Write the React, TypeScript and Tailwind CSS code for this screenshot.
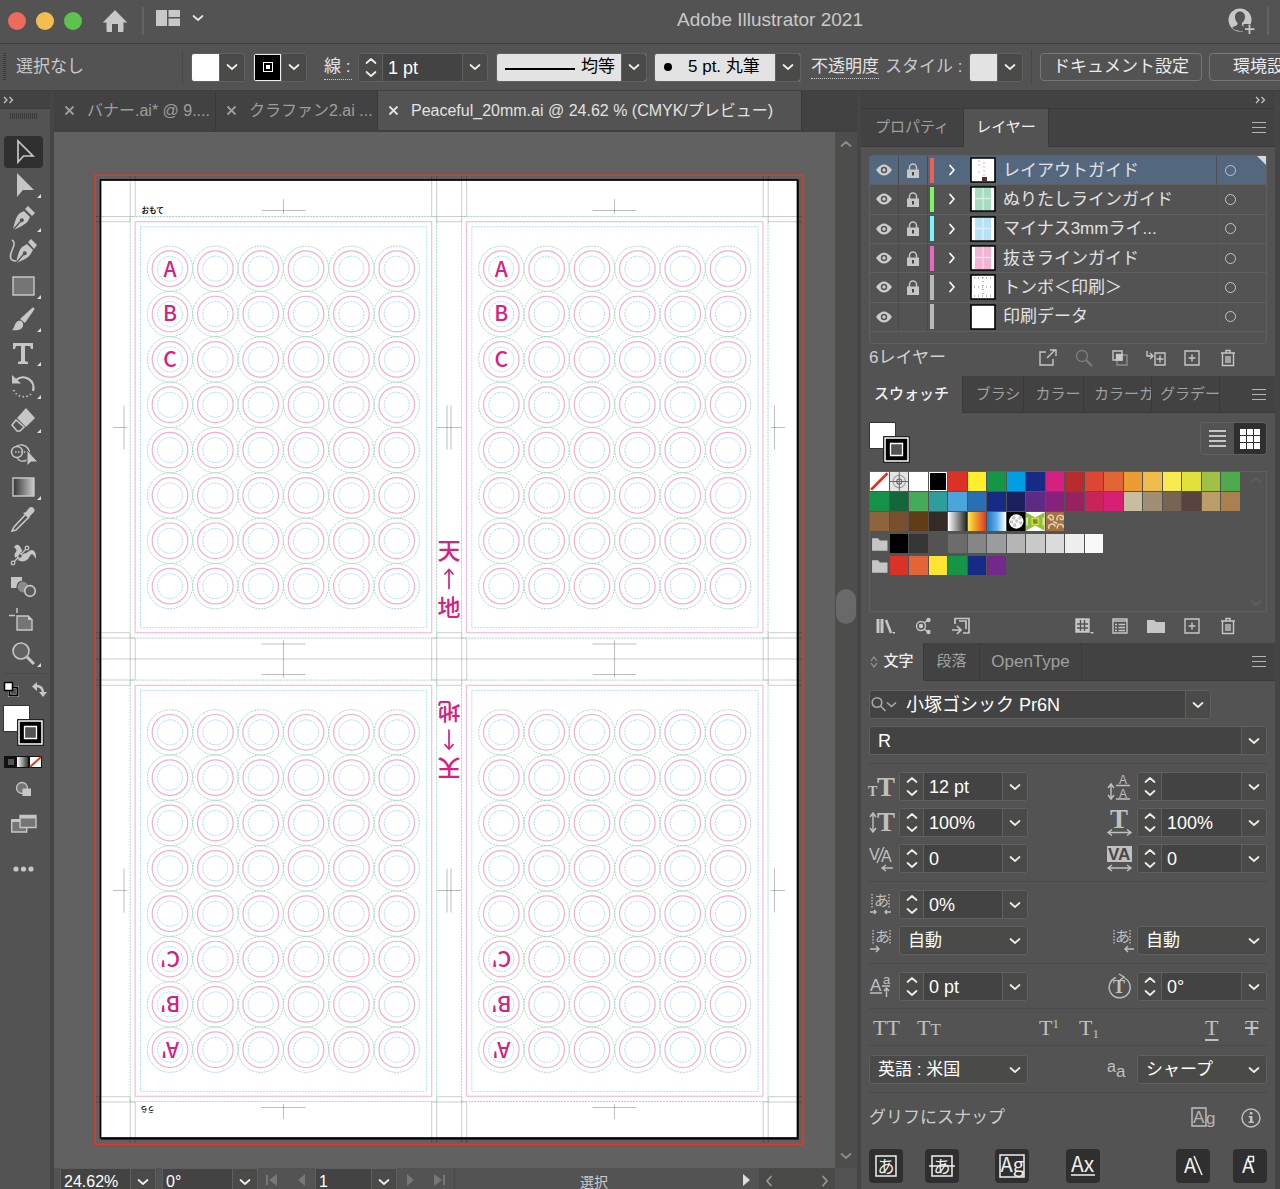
import type { ReactNode } from 'react'
import clsx from 'clsx'

const JP = "font-['Liberation_Sans','Noto_Sans_CJK_JP',sans-serif]"

/* ---------- small shared pieces ---------- */

function Chevron({ up, className }: { up?: boolean; className?: string }) {
  return (
    <svg width="12" height="8" viewBox="0 0 12 8" className={clsx('shrink-0', className)} fill="none" stroke="currentColor" strokeWidth="1.7" strokeLinecap="round" strokeLinejoin="round">
      <path d={up ? 'M1.5 6 6 2l4.500 4' : 'M1.500 2 6 6l4.500-4'} />
    </svg>
  )
}

function DropButton({ label }: { label: string }) {
  return (
    <button aria-label={label} className="flex w-[25px] shrink-0 items-center justify-center self-stretch border-l border-[#606060] bg-[#4a4a48] text-[#eee]">
      <Chevron />
    </button>
  )
}

function Stepper({ label }: { label: string }) {
  return (
    <div className="flex w-6 shrink-0 flex-col justify-between border-r border-[#606060] bg-[#4a4a48] py-px text-[#eee]">
      <button aria-label={`${label} を増やす`} className="flex h-3 items-center justify-center"><Chevron up /></button>
      <button aria-label={`${label} を減らす`} className="flex h-3 items-center justify-center"><Chevron /></button>
    </div>
  )
}

interface FieldProps {
  label: string
  value: string
  stepper?: boolean
  className?: string
  lead?: ReactNode
}

function Field({ label, value, stepper, className, lead }: FieldProps) {
  return (
    <div className={clsx('flex h-[29px] shrink-0 overflow-hidden rounded-[3px] border border-[#606060] bg-[#434343]', className)}>
      {stepper && <Stepper label={label} />}
      {lead}
      <input aria-label={label} defaultValue={value} className={clsx('w-0 min-w-0 flex-1 bg-transparent pt-[2px] text-[18px] text-white outline-none', stepper ? 'pl-[5px]' : 'pl-2')} />
      <DropButton label={`${label} の候補`} />
    </div>
  )
}

function Select({ label, value, className }: { label: string; value: string; className?: string }) {
  return (
    <div className={clsx('relative h-[29px] shrink-0 rounded-[3px] border border-[#606060] bg-[#4a4a48]', className)}>
      <select aria-label={label} className="h-full w-full appearance-none bg-transparent pl-2 text-[17px] text-white outline-none">
        <option>{value}</option>
      </select>
      <Chevron className="pointer-events-none absolute top-[10px] right-[6px] text-[#eee]" />
    </div>
  )
}

function SwatchDrop({ label, children }: { label: string; children: ReactNode }) {
  return (
    <div className="flex h-[29px] w-[54px] shrink-0 overflow-hidden rounded-[3px] border border-[#606060]">
      <div className="flex-1">{children}</div>
      <DropButton label={label} />
    </div>
  )
}

function MenuIcon() {
  return (
    <button aria-label="パネルメニュー" className="flex w-[14px] flex-col gap-1">
      <span className="h-px w-full bg-[#b5b5b5]" />
      <span className="h-px w-full bg-[#b5b5b5]" />
      <span className="h-px w-full bg-[#b5b5b5]" />
    </button>
  )
}

function Collapse() {
  return (
    <svg width="11" height="8" viewBox="0 0 11 8" fill="none" stroke="#c4c4c4" strokeWidth="1.300">
      <path d="M1 1l3 3-3 3M6.500 1l3 3-3 3" />
    </svg>
  )
}

/* ---------- title bar and control bar ---------- */

function TitleBar() {
  return (
    <header className="flex h-11 shrink-0 items-center border-b border-[#404040] bg-[#535353] pb-[2px]">
      <div className="flex w-[312px] shrink-0 items-center pl-2">
        <div className="flex gap-[10px]">
          <button aria-label="閉じる" className="h-[18px] w-[18px] rounded-full bg-[#ee6a5f]" />
          <button aria-label="しまう" className="h-[18px] w-[18px] rounded-full bg-[#f5bd4f]" />
          <button aria-label="拡大" className="h-[18px] w-[18px] rounded-full bg-[#5dc24e]" />
        </div>
        <button aria-label="ホーム" className="ml-5">
          <svg width="26" height="24" viewBox="0 0 26 24" fill="#c8c8c8">
            <path d="M13 1 .800 13.500h3.700V22q0 1 1 1H10v-8h6v8h4.500q1 0 1-1v-8.500h3.700z" />
          </svg>
        </button>
        <div className="ml-[14px] h-7 w-[2px] bg-[#626262]" />
        <button aria-label="ワークスペース" className="mb-[6px] ml-3 flex items-center gap-3 text-[#e6e6e6]">
          <svg width="24" height="16" viewBox="0 0 24 16" fill="#c8c8c8">
            <path d="M0 0h11v16H0zM12.500 0H24v7H12.500zM12.500 8.500H24V16H12.500z" />
          </svg>
          <Chevron />
        </button>
      </div>
      <h1 className="flex-1 text-center text-[19px] text-[#c9c9c9]">Adobe Illustrator 2021</h1>
      <div className="flex w-[52px] shrink-0 items-center gap-3">
        <button aria-label="アカウント">
          <svg width="27" height="26" viewBox="0 0 27 26">
            <circle cx="12" cy="12" r="11.500" fill="#c8c8c8" />
            <path d="M12 3.500c-3.500 0-5 2.500-5 5.500 0 2.500 1 4.500 2.500 5.800v1.500C9 18 5 18.500 4 20q3.500 3 8 3h4v-4c-1.500-.800-2-1.500-2-2.700v-1.500C16 13.500 17 11.500 17 9c0-3-1.500-5.500-5-5.500z" fill="#535353" />
            <path d="M15.500 16H27v10H15.500z" fill="#535353" />
            <path d="M21.500 16.500v9.500M17 21.200h9.500" stroke="#c8c8c8" strokeWidth="1.800" />
          </svg>
        </button>
        <div className="h-7 w-[2px] bg-[#626262]" />
      </div>
    </header>
  )
}

function ControlBar() {
  return (
    <div className="flex h-[47px] shrink-0 items-center overflow-hidden border-b border-[#404040] bg-[#535353] text-[17px] whitespace-nowrap text-[#c8c8c8]">
      <div className="ml-[3px] h-7 w-[3px] shrink-0 bg-[repeating-linear-gradient(#3c3c3c_0_1px,#535353_1px_2px)]" />
      <span className="ml-[10px] w-[166px] shrink-0">選択なし</span>
      <div className="mr-2 h-[34px] w-px shrink-0 bg-[#484848]" />
      <SwatchDrop label="塗り"><div className="h-full bg-white" /></SwatchDrop>
      <div className="ml-2">
        <SwatchDrop label="線のカラー">
          <div className="flex h-full items-center justify-center border border-[#eee] bg-black">
            <div className="flex h-[10px] w-[10px] items-center justify-center border border-white"><div className="h-1 w-1 bg-white" /></div>
          </div>
        </SwatchDrop>
      </div>
      <span className="ml-[17px] w-7 shrink-0 border-b border-dotted border-[#ccc] leading-6 text-[#e4e4e4]">線 :</span>
      <Field label="線幅" value="1 pt" stepper className="ml-[6px] w-[130px]" />
      <div className="ml-2 flex h-[29px] w-[151px] shrink-0 overflow-hidden rounded-[3px] border border-[#606060] bg-[#e3e3e3]">
        <svg width="78" height="27" viewBox="0 0 78 27" className="shrink-0"><path d="M8 15h70" stroke="#000" strokeWidth="2.200" /></svg>
        <select aria-label="可変線幅プロファイル" className="w-0 min-w-0 flex-1 appearance-none bg-transparent pl-[6px] text-black outline-none"><option>均等</option></select>
        <DropButton label="プロファイルの候補" />
      </div>
      <div className="ml-[7px] flex h-[29px] w-[147px] shrink-0 items-center overflow-hidden rounded-[3px] border border-[#606060] bg-[#e3e3e3]">
        <div className="ml-[9px] h-2 w-2 shrink-0 rounded-full bg-black" />
        <select aria-label="ブラシ定義" className="w-0 min-w-0 flex-1 appearance-none bg-transparent pl-4 text-black outline-none"><option>5 pt. 丸筆</option></select>
        <DropButton label="ブラシの候補" />
      </div>
      <a href="#opacity" className="ml-[10px] shrink-0 border-b border-dotted border-[#ccc] leading-[23px] text-[#e4e4e4]">不透明度</a>
      <span className="ml-[6px] w-[84px] shrink-0">スタイル :</span>
      <SwatchDrop label="スタイル"><div className="h-full bg-[#e3e3e3]" /></SwatchDrop>
      <div className="mx-2 h-[34px] w-px shrink-0 bg-[#484848]" />
      <button className="h-7 w-[162px] shrink-0 rounded-[4px] border border-[#777] leading-6 text-[#ececec]">ドキュメント設定</button>
      <button className="ml-[7px] h-7 w-[116px] shrink-0 rounded-[4px] border border-[#777] leading-6 text-[#ececec]">環境設定</button>
    </div>
  )
}

/* ---------- tool bar ---------- */

const G = '#c6c6c6'

const tools: { name: string; more?: boolean; art: ReactNode }[] = [
  { name: '選択', art: <path d="M11 4v21l5.500-6H26z" fill="none" stroke={G} strokeWidth="1.700" /> },
  { name: 'ダイレクト選択', more: true, art: <path d="M10 3v24l6-7h11z" fill={G} /> },
  {
    name: 'ペン',
    more: true,
    art: (
      <>
        <path d="M6 25C8 18 9 12 13 9l4-2 6 6-2 4c-3 4-9 6-14 9l7-8a2 2 0 1 0-1-1z" fill={G} />
        <path d="m18 5 3-3 7 7-3 3z" fill={G} />
      </>
    ),
  },
  {
    name: '曲線',
    art: (
      <>
        <path d="M9 25c2-7 3-12 6-15l5-3 6 6-3 5c-3 4-8 5-13 8l7-8a2 2 0 1 0-1-1z" fill={G} />
        <path d="m21 5 3-3 6 6-3 4z" fill={G} />
        <path d="M5 3c7 4-6 15 0 20 2 1 3 1 4 1" fill="none" stroke={G} strokeWidth="1.500" />
      </>
    ),
  },
  { name: '長方形', more: true, art: <path d="M6 6h21v18H6z" fill="#757575" stroke={G} strokeWidth="1.400" /> },
  {
    name: 'ブラシ',
    more: true,
    art: (
      <>
        <path d="M5 26c3-2 2-7 6-9 3-1 6 1 5 5-1 4-6 5-11 4z" fill={G} />
        <path d="M13 15 25 4c2-1 3 0 2 2L18 19z" fill={G} />
      </>
    ),
  },
  { name: '文字', more: true, art: <path d="M6 5h20v6h-2l-1-3h-5v15l3 1v2H11v-2l3-1V8H9l-1 3H6z" fill={G} /> },
  {
    name: '回転',
    more: true,
    art: (
      <>
        <path d="M9 9a10.500 10.500 0 0 1 17 11" fill="none" stroke={G} strokeWidth="2.300" />
        <path d="M24 23a11 11 0 0 1-18-6" fill="none" stroke={G} strokeWidth="1.600" strokeDasharray="1.500 2.300" />
        <path d="M5 4v8.500h9z" fill={G} />
      </>
    ),
  },
  {
    name: '消しゴム',
    more: true,
    art: (
      <>
        <path d="M19 3 10 13l9 9 9-9z" fill={G} />
        <path d="m9 15-4 5 5 6h3l4-4z" fill="none" stroke={G} strokeWidth="1.600" />
      </>
    ),
  },
  {
    name: 'シェイプ形成',
    art: (
      <>
        <circle cx="10" cy="14" r="5.500" fill="none" stroke={G} strokeWidth="1.400" />
        <path d="M9 8.500a8.500 8.500 0 1 1 10 14c-5 2-8-1-9-3" fill="none" stroke={G} strokeWidth="1.400" />
        <path d="M8 14h14" stroke={G} strokeWidth="1.400" strokeDasharray="1.500 1.500" />
        <path d="M20 12v16l4-4h7z" fill={G} stroke="#535353" strokeWidth="1" />
      </>
    ),
  },
  { name: 'グラデーション', more: true, art: <path d="M6 6h21v18H6z" fill="url(#toolGradient)" stroke={G} strokeWidth="1.400" /> },
  {
    name: 'スポイト',
    art: (
      <>
        <path d="M18 10 7 22l-2 4 4-1 12-12" fill="none" stroke={G} strokeWidth="1.600" />
        <path d="m16 8 3-1 3-4c3-3 7 1 5 4l-4 4-1 3z" fill={G} />
      </>
    ),
  },
  {
    name: 'パペットワープ',
    art: (
      <>
        <path d="M7 8c5-6 7 2 9 5 3 4 5-2 9-2 4 1 4 5 4 9-3-5-4-6-6-3-4 8-12 6-15 1-2-4 3-5 1-8z" fill={G} />
        <path d="M6 24 20 9" stroke="#535353" strokeWidth="3" />
        <path d="M6 24 20 9" stroke={G} strokeWidth="1.300" />
        <g fill="#535353" stroke={G} strokeWidth="1.300"><circle cx="6" cy="24" r="1.800" /><circle cx="13" cy="17" r="2.300" /><circle cx="20" cy="9" r="1.800" /></g>
      </>
    ),
  },
  {
    name: 'ブレンド',
    art: (
      <>
        <path d="M4 5h11v11H4z" fill={G} />
        <circle cx="16" cy="15" r="6" fill="#8a8a8a" stroke="#535353" strokeWidth="1.200" />
        <circle cx="23" cy="19" r="5.300" fill="#5a5a5a" stroke={G} strokeWidth="1.700" />
      </>
    ),
  },
  {
    name: 'アートボード',
    art: (
      <>
        <path d="M10 2v5M2 9.500h6" stroke={G} strokeWidth="1.500" />
        <path d="M10 10h11l4 4v10H10z" fill="#757575" stroke={G} strokeWidth="1.400" />
        <path d="M21 9v5h5z" fill={G} />
      </>
    ),
  },
  {
    name: 'ズーム',
    more: true,
    art: (
      <>
        <circle cx="14" cy="12" r="8" fill="#626262" stroke={G} strokeWidth="1.600" />
        <path d="m20 18 7 7" stroke={G} strokeWidth="3" />
      </>
    ),
  },
]

// overlapping fill and stroke squares
function FillStroke() {
  return (
    <svg width="41" height="41" viewBox="0 0 41 41" className="shrink-0">
      <path d="M.500.500h26v26H.500z" fill="#fff" stroke="#333" />
      <path d="M14.500 14.500h26v26h-26z" fill="#000" stroke="#222" />
      <path d="M16 16h23v23H16z" fill="#000" stroke="#fff" strokeWidth="1.500" />
      <path d="M21.500 21.500h12v12h-12z" fill="#535353" stroke="#fff" strokeWidth="1.300" />
    </svg>
  )
}

function ToolBar() {
  return (
    <aside className="flex w-[50px] shrink-0 flex-col bg-[#535353]">
      <div className="flex h-[18px] shrink-0 items-center border-b border-[#3d3d3d] bg-[#424242] pl-[3px]"><Collapse /></div>
      <div className="mt-1 ml-[10px] h-[6px] w-[27px] shrink-0 bg-[repeating-linear-gradient(90deg,#3a3a3a_0_1px,#535353_1px_2px)]" />
      <div className="mt-4 grid h-[536px] shrink-0 grid-rows-[repeat(16,minmax(0,1fr))] pl-1">
        {tools.map((tool, i) => (
          <button key={tool.name} aria-label={tool.name} className={clsx('flex w-[39px] items-center justify-center rounded-[4px]', i === 0 && 'my-px bg-[#303030]')}>
            <svg width="39" height="30" viewBox="-3 0 39 30">
              <defs><linearGradient id="toolGradient"><stop offset="0" stopColor="#333" /><stop offset="1" stopColor="#ccc" /></linearGradient></defs>
              {tool.art}
              {tool.more && <path d="M34 24v4h-4z" fill="#ddd" />}
            </svg>
          </button>
        ))}
      </div>
      <div className="mx-1 mt-[2px] h-px bg-[#4a4a4a]" />
      <div className="mt-[7px] flex h-4 items-center justify-between pr-[3px] pl-[3px]">
        <svg width="16" height="16" viewBox="0 0 16 16">
          <path d="M6.500 6.500h8v8h-8z" fill="#535353" stroke="#ddd" strokeWidth="3" />
          <path d="M6.500 6.500h8v8h-8z" fill="none" stroke="#000" strokeWidth="2" />
          <path d="M1.500 1.500h8v8h-8z" fill="#fff" stroke="#000" strokeWidth="1.500" />
        </svg>
        <svg width="15" height="15" viewBox="0 0 15 15">
          <path d="M4 4c5 0 7 2 7 7" fill="none" stroke={G} strokeWidth="2.400" />
          <path d="M0 4.500 5 0v9zM7 10h8l-4 5z" fill={G} />
        </svg>
      </div>
      <div className="mt-2 ml-[3px]"><FillStroke /></div>
      <svg width="38" height="12" viewBox="0 0 38 12" className="mt-[10px] ml-1">
        <defs><linearGradient id="miniGradient"><stop offset="0" stopColor="#fff" /><stop offset="1" stopColor="#333" /></linearGradient></defs>
        <path d="M0 0h38v12H0z" fill="#111" />
        <path d="M4 3h6v6H4z" fill="#535353" />
        <path d="M13 1h11v10H13z" fill="url(#miniGradient)" />
        <path d="M26 1h11v10H26z" fill="#fff" />
        <path d="m26 11 11-10" stroke="#e3371e" strokeWidth="2" />
      </svg>
      <svg width="20" height="18" viewBox="0 0 20 18" className="mt-3 ml-[14px]">
        <circle cx="8" cy="8" r="5.500" fill="#757575" stroke={G} strokeWidth="1.300" />
        <path d="M8.500 8.500H17V16H8.500z" fill={G} />
      </svg>
      <svg width="26" height="19" viewBox="0 0 26 19" className="mt-4 ml-[11px]">
        <path d="M.700 6h15v12H.700z" fill="#757575" stroke={G} strokeWidth="1.400" />
        <path d="M1 5h9v3H1z" fill={G} />
        <path d="M9 1.500h16v12H9z" fill="#757575" stroke={G} strokeWidth="1.400" />
        <path d="M9 1h16v3.500H9z" fill={G} />
      </svg>
      <svg width="22" height="6" viewBox="0 0 22 6" fill={G} className="mt-[33px] ml-[13px]">
        <circle cx="3" cy="3" r="2.600" /><circle cx="10.500" cy="3" r="2.600" /><circle cx="18" cy="3" r="2.600" />
      </svg>
    </aside>
  )
}

/* ---------- document window ---------- */

function DocTab({ title, active, className }: { title: string; active?: boolean; className: string }) {
  return (
    <div className={clsx('flex shrink-0 items-center gap-3 border-r border-[#383838] px-[10px] whitespace-nowrap', active ? 'bg-[#535353] text-[#e2e2e2]' : 'bg-[#424242] text-[#9e9e9e]', className)}>
      <button aria-label={`${title} を閉じる`}>
        <svg width="11" height="11" viewBox="0 0 11 11" stroke="currentColor" strokeWidth="1.800"><path d="m1.500 1.500 8 8m0-8-8 8" /></svg>
      </button>
      <button className="text-[16px]">{title}</button>
    </div>
  )
}

const blocks = [
  { x: 0, y: 0, labels: [[0, 'A', 8], [1, 'B', 7], [2, 'C', 8]], flip: false },
  { x: 331.3, y: 0, labels: [[0, 'A', 8], [1, 'B', 7], [2, 'C', 8]], flip: false },
  { x: 0, y: 463.6, labels: [[5, "C'", 8], [6, "B'", 8], [7, "A'", 8]], flip: true },
  { x: 331.3, y: 463.6, labels: [[5, "C'", 8], [6, "B'", 8], [7, "A'", 8]], flip: true },
] as const

const PITCH = 45.35

function Sheet({ labels, flip }: { labels: readonly (readonly [number, string, number])[]; flip: boolean }) {
  const cells = Array.from({ length: 48 }, (_, i) => [170 + (i % 6) * PITCH, 268.7 + Math.floor(i / 6) * PITCH])
  return (
    <>
      <rect x="130.200" y="216.500" width="306.500" height="421.500" stroke="#a5dabc" strokeDasharray="2 1" />
      <rect x="135.200" y="221.700" width="296.500" height="411" stroke="#f6bdd9" strokeWidth="1.200" />
      <rect x="140.500" y="226.700" width="286.200" height="401" stroke="#abe0fa" strokeDasharray="2 1" />
      {cells.map(([cx, cy], i) => (
        <g key={i}>
          <circle cx={cx} cy={cy} r="22.600" stroke="#9bd6b5" strokeWidth=".900" strokeDasharray="2 1" />
          <circle cx={cx} cy={cy} r="17.800" stroke="#f2add0" strokeWidth="1.200" />
          <circle cx={cx} cy={cy} r="12.500" stroke="#a3dcf9" strokeDasharray="2 1" />
        </g>
      ))}
      {labels.map(([row, text, drop]) => {
        const cy = 268.7 + row * PITCH
        return (
          <text key={text} x="170" y={cy + drop} textAnchor="middle" fontSize="21" fontWeight="500" fill="#d7207f" transform={flip ? `rotate(180 170 ${cy})` : undefined}>
            {text}
          </text>
        )
      })}
    </>
  )
}

function SpineLabel() {
  return (
    <g fill="#d7207f" fontSize="23" fontWeight="500" textAnchor="middle">
      <text x="449" y="559">天</text>
      <path d="M449 589v-19M444.500 574.500l4.500-5 4.500 5" fill="none" stroke="#d7207f" strokeWidth="1.700" />
      <text x="449" y="616">地</text>
    </g>
  )
}

function Artwork() {
  return (
    <svg viewBox="94 174 710 971" className="h-[971px] w-[710px] shrink-0 font-['Noto_Sans_CJK_JP',sans-serif]" fill="none">
      <rect x="95" y="175.200" width="708" height="969" stroke="#e2382a" strokeWidth="1.500" />
      <rect x="101" y="180" width="698" height="960" fill="#2c2c2c" />
      <rect x="100.500" y="180" width="697" height="958" fill="#fff" stroke="#000" strokeWidth="1.700" />
      {/* trim marks */}
      <g stroke="#000" strokeOpacity=".2" strokeWidth="1">
        <path d="M130.200 176v46M135.200 176v41M431.700 176v41M436.700 176v46M461.700 176v46M466.700 176v41M763.200 176v41M768.200 176v46" />
        <path d="M130.200 1143v-46M135.200 1143v-41M431.700 1143v-41M436.700 1143v-46M461.700 1143v-46M466.700 1143v-41M763.200 1143v-41M768.200 1143v-46" />
        <path d="M96 216.500h39M96 221.700h34M763 216.500h39M768 221.700h34M96 1096.700h34M96 1102h39M768 1096.700h34M763 1102h39" />
        <path d="M436.700 221.700h25M431.700 216.500h35M436.700 1096.700h25M431.700 1102h35" />
        <path d="M96 632.700h34M96 638h39M96 680h39M96 685.300h34M768 632.700h34M763 638h39M763 680h39M768 685.300h34M96 659h706" />
        <path d="M130.200 633v52M135.200 638v42M763.200 638v42M768.200 633v52" />
        <path d="M436.700 632.700h25v52.600h-25zM431.700 638h35v42h-35z" />
      </g>
      {/* centre marks */}
      <g stroke="#000" strokeOpacity=".25" strokeWidth="1">
        {[283.5, 614.5].map((x) => (
          <path key={x} d={`M${x} 199v15M${x - 22} 210.500h44M${x} 640.500v37M${x - 22} 644h44M${x - 22} 674.500h44M${x} 1104v15M${x - 22} 1107.500h44`} />
        ))}
        {[427.5, 890.5].map((y) => (
          <path key={y} d={`M124 ${y - 22}v44M113 ${y}h14M447 ${y - 22}v44M451 ${y - 22}v44M437 ${y}h25M774.500 ${y - 22}v44M771 ${y}h14`} />
        ))}
      </g>
      {blocks.map((b) => (
        <g key={`${b.x}-${b.y}`} transform={`translate(${b.x} ${b.y})`}>
          <Sheet labels={b.labels} flip={b.flip} />
        </g>
      ))}
      <SpineLabel />
      <g transform="rotate(180 449 659.300)"><SpineLabel /></g>
      <text x="141.500" y="213" fontSize="7.500" fontWeight="700" fill="#111">おもて</text>
      <text x="140.500" y="1113" fontSize="7" fontWeight="700" fill="#111" transform="rotate(180 147.500 1110)">うら</text>
    </svg>
  )
}

function Arrow({ d, dim, label }: { d: string; dim?: boolean; label: string }) {
  return (
    <button aria-label={label} className={dim ? 'text-[#777]' : 'text-[#ddd]'}>
      <svg width="12" height="12" viewBox="0 0 12 12" fill="currentColor"><path d={d} /></svg>
    </button>
  )
}

function StatusSelect({ label, value, className }: { label: string; value: string; className: string }) {
  return (
    <div className={clsx('flex h-7 shrink-0 border border-[#5e5e5e] bg-[#434343]', className)}>
      <input aria-label={label} defaultValue={value} className="w-0 min-w-0 flex-1 bg-transparent pl-[3px] text-[16px] text-white outline-none" />
      <DropButton label={`${label} の候補`} />
    </div>
  )
}

function DocumentWindow() {
  return (
    <main className="flex min-w-0 flex-1 flex-col border-l-4 border-[#454545]">
      <div className="flex h-[41px] shrink-0 overflow-hidden border-b-2 border-[#404040] bg-[#424242]">
        <DocTab title="バナー.ai* @ 9...." className="w-[162px]" />
        <DocTab title="クラファン2.ai ..." className="w-[162px]" />
        <DocTab title="Peaceful_20mm.ai @ 24.62 % (CMYK/プレビュー)" active className="w-[424px]" />
      </div>
      <div className="flex min-h-0 flex-1">
        <div className="min-w-0 flex-1 overflow-hidden bg-[#616161] pt-[42px] pl-10">
          <Artwork />
        </div>
        <div className="flex w-[22px] shrink-0 flex-col items-center justify-between bg-[#4d4d4b] py-2 text-[#8e8e8e]">
          <Chevron up />
          <div className="mb-[88px] h-[35px] w-5 rounded-full bg-[#696969]" />
          <Chevron />
        </div>
      </div>
      <div className="flex h-[21px] shrink-0 items-start overflow-hidden bg-[#535353] pl-[6px]">
        <StatusSelect label="ズーム率" value="24.62%" className="w-[96px]" />
        <StatusSelect label="ビューを回転" value="0°" className="ml-[6px] w-[96px]" />
        <div className="flex w-[57px] items-center justify-around pt-[6px]">
          <Arrow label="最初" dim d="M0 1h2v10H0zM11 0v12L3 6z" />
          <Arrow label="前へ" dim d="M10 0v12L3 6z" />
        </div>
        <StatusSelect label="アートボード" value="1" className="w-[82px]" />
        <div className="flex w-[57px] items-center justify-around pt-[6px]">
          <Arrow label="次へ" dim d="M2 0v12l7-6z" />
          <Arrow label="最後" dim d="M9 1h2v10H9zM0 0v12l8-6z" />
        </div>
        <span className="flex-1 border-l border-[#4a4a4a] text-center text-[14px] leading-7 text-[#ccc]">選択</span>
        <div className="flex w-[26px] justify-center pt-[6px]"><Arrow label="ステータス" d="M3 0v12l7-6z" /></div>
        <div className="flex h-full w-[76px] items-center justify-between bg-[#4a4a48] px-1 pt-1 text-[#999]">
          <Chevron className="rotate-90" />
          <Chevron className="-rotate-90" />
        </div>
        <div className="w-[22px]" />
      </div>
    </main>
  )
}

/* ---------- panels ---------- */

interface PanelTabProps {
  label: string
  active?: boolean
  latin?: boolean
  className: string
  lead?: ReactNode
}

function PanelTab({ label, active, latin, className, lead }: PanelTabProps) {
  return (
    <button
      className={clsx(
        'shrink-0 overflow-hidden border-r border-b border-[#3a3a3a] whitespace-nowrap',
        latin ? 'text-[17px]' : 'text-[15px]',
        active ? 'border-b-transparent bg-[#535353] text-[#f0f0f0]' : 'bg-[#424242] text-[#a0a0a0]',
        className,
      )}
    >
      {lead}
      {label}
    </button>
  )
}

function PanelTabs({ children, className }: { children: ReactNode; className: string }) {
  return (
    <div className={clsx('flex shrink-0 bg-[#424242]', className)}>
      {children}
      <div className="flex flex-1 items-center justify-end border-b border-[#3a3a3a] pr-[9px]"><MenuIcon /></div>
    </div>
  )
}

function FooterIcon({ label, children, dim }: { label: string; children: ReactNode; dim?: boolean }) {
  return (
    <button aria-label={label} className={dim ? 'opacity-35' : undefined}>
      <svg width="20" height="18" viewBox="0 0 20 18" fill="none" stroke="#c6c6c6" strokeWidth="1.400">{children}</svg>
    </button>
  )
}

const trash = (
  <FooterIcon label="削除">
    <path d="M3 4h14M8 4V1.500h4V4M4.500 4.500V16.500h11V4.500M8 7v7M10 7v7M12 7v7" />
  </FooterIcon>
)

const newItem = (
  <FooterIcon label="新規作成">
    <path d="M3 2h14v14H3zM10 5.500v7M6.500 9h7" />
  </FooterIcon>
)

const layers = [
  { name: 'レイアウトガイド', bar: 'bg-[#f0604f]', locked: true, thumb: 'guide' },
  { name: 'ぬりたしラインガイド', bar: 'bg-[#7cf763]', locked: true, thumb: '#a6dcc0' },
  { name: 'マイナス3mmライ...', bar: 'bg-[#7df4f8]', locked: true, thumb: '#b5e2f9' },
  { name: '抜きラインガイド', bar: 'bg-[#e667c4]', locked: true, thumb: '#f2b3d5' },
  { name: 'トンボ＜印刷＞', bar: 'bg-[#b9b9b9]', locked: true, thumb: 'marks' },
  { name: '印刷データ', bar: 'bg-[#b9b9b9]', locked: false, thumb: '' },
]

function Thumb({ kind }: { kind: string }) {
  return (
    <svg width="26" height="26" viewBox="0 0 26 26" className="shrink-0">
      <path d="M1 1h24v24H1z" fill="#fff" stroke="#000" strokeWidth="1.600" />
      {kind.startsWith('#') && (
        <>
          <path d="M5 2h16v22H5z" fill={kind} />
          <path d="M5 12.500h16M13 2v22" stroke="#fff" strokeOpacity=".5" strokeWidth="1.500" />
        </>
      )}
      {kind === 'guide' && (
        <>
          <path d="M9 3v7M14 5v14M9 14v3" stroke="#f0a6c4" strokeDasharray="2 2" />
          <path d="M12 20h5v4h-5z" fill="#542f35" />
        </>
      )}
      {kind === 'marks' && <path d="M4 4h18M4 13h18M4 22h18M13 3v20" stroke="#777" strokeDasharray="1 3" />}
    </svg>
  )
}

function LayersPanel() {
  return (
    <section className="flex h-[227px] shrink-0 flex-col bg-[#535353] px-2 pt-2">
      <ul className="grid h-[189px] grid-rows-[repeat(6,minmax(0,1fr))] rounded-[3px] border border-[#5f5f5f] pb-[11px]">
        {layers.map((layer, i) => (
          <li key={layer.name} className={clsx('relative flex items-center border-b border-[#5f5f5f]', i === 0 && 'bg-[#53687e]')}>
            <button aria-label="表示" className="flex w-7 shrink-0 justify-center">
              <svg width="18" height="12" viewBox="0 0 18 12">
                <path d="M1 6q8-11 16 0-8 11-16 0z" fill="#cdcdcd" />
                <circle cx="9" cy="6" r="3.200" fill="#535353" />
                <circle cx="9" cy="6" r="1.700" fill="#cdcdcd" />
              </svg>
            </button>
            <button aria-label="ロック" className="flex h-full w-[30px] shrink-0 items-center justify-center border-x border-[#4a4a4a]">
              {layer.locked && (
                <svg width="12" height="15" viewBox="0 0 12 15">
                  <path d="M2.500 7V4.500a3.500 3.500 0 0 1 7 0V7" fill="none" stroke="#c6c6c6" strokeWidth="1.500" />
                  <path d="M0 6.500h12V15H0z" fill="#c6c6c6" />
                  <path d="M5 9h2v3.500H5z" fill="#444" />
                </svg>
              )}
            </button>
            <span className={clsx('ml-[2px] h-[25px] w-1 shrink-0', layer.bar)} />
            <button aria-label="展開" className="flex w-9 shrink-0 justify-center text-white">
              {layer.locked && <Chevron className="-rotate-90" />}
            </button>
            <Thumb kind={layer.thumb} />
            <span className="ml-[7px] flex-1 truncate pt-px text-[17px] leading-[28px] text-[#e2e2e2]">{layer.name}</span>
            <button aria-label="ターゲット" className="flex h-full w-[50px] shrink-0 items-center border-l border-[#4f4f4f] pl-[8px]">
              <span className="h-[11px] w-[11px] rounded-full border-[1.5px] border-[#c6c6c6]" />
            </button>
            {i === 0 && (
              <svg width="9" height="9" viewBox="0 0 9 9" className="absolute top-0 right-0"><path d="M0 0h9v9z" fill="#d8d8d8" /></svg>
            )}
          </li>
        ))}
      </ul>
      <div className="flex h-7 items-center pr-[29px]">
        <span className="flex-1 text-[17px] text-[#d0d0d0]">6レイヤー</span>
        <div className="flex gap-4">
          <FooterIcon label="書き出し"><path d="M8 3H2v13h13v-6M9 9l8-8M12 1h6v6" /></FooterIcon>
          <FooterIcon label="検索" dim><circle cx="8" cy="7" r="5.500" /><path d="m12 11 6 6" strokeWidth="2.200" /></FooterIcon>
          <FooterIcon label="マスク"><path d="M3 2h9v9H3z" /><path d="M7 6h10v10H7z" opacity=".5" /><path d="M6.500 5.500H12V11H6.500z" fill="#ccc" /></FooterIcon>
          <FooterIcon label="サブレイヤー"><path d="M9 4h10v12H9zM14 6.500v7M10.500 10h7M1 2v5h6M4 4l3 3-3 3" /></FooterIcon>
          {newItem}
          {trash}
        </div>
      </div>
    </section>
  )
}

const swatchRows = [
  ['none', 'register', '#ffffff', 'black', '#dc3127', '#fdee30', '#149548', '#009fe4', '#172a85', '#d6207e', '#b82c2e', '#dc4632', '#e36436', '#ea9b32', '#efbc4c', '#f6ea4e', '#dfe03b', '#9fc145', '#4faa4b'],
  ['#149249', '#14673c', '#46ab59', '#2f9c9d', '#4ba5dc', '#2a6fb4', '#172a85', '#1a2060', '#5f2a84', '#86217c', '#972260', '#c82457', '#d81f78', '#c9bd9f', '#a08d74', '#786452', '#574440', '#bd9c69', '#ab7f4e'],
  ['#8d643c', '#785030', '#623c16', '#342b27', 'linear-gradient(90deg,#fff,#222)', 'linear-gradient(90deg,#fdea45,#f0902c,#de3b25)', 'linear-gradient(90deg,#2276c4,#5fb0e8,#fff)', 'dots', 'leaves', 'scroll'],
  ['folder', '#000000', '#363636', '#535353', '#6c6c6a', '#868686', '#9b9c9e', '#b4b5b5', '#c8caca', '#dbdbdb', '#eeeeee', '#f8f9f9'],
  ['folder', '#dc3127', '#e36436', '#fde433', '#149548', '#172a85', '#73298a'],
]

function Swatch({ kind }: { kind: string }) {
  if (kind === 'none') {
    return <svg viewBox="0 0 18 18" className="h-full w-full bg-white"><path d="m1 17L17 1" stroke="#e3301e" strokeWidth="2.500" /></svg>
  }
  if (kind === 'register') {
    return (
      <svg viewBox="0 0 18 18" className="h-full w-full bg-[#e4e4e4]" fill="none" stroke="#666">
        <circle cx="9" cy="9" r="6" stroke="#999" /><circle cx="9" cy="9" r="2.500" /><path d="M9 0v18M0 9h18" />
      </svg>
    )
  }
  if (kind === 'folder') {
    return <svg viewBox="0 0 18 18" className="h-full w-full"><path d="M2 4h6l1.500 2H17v10H2z" fill="#c6c6c6" /></svg>
  }
  if (kind === 'dots') {
    return (
      <svg viewBox="0 0 18 18" className="h-full w-full bg-black">
        <circle cx="9" cy="9" r="7" fill="#fff" />
        <path d="M5 4h3v3H5zM11 4h3v3h-3zM8 7h3v3H8zM3 8h3v3H3zM12 9h3v3h-3zM6 11h3v3H6z" fill="#c4c4c4" />
      </svg>
    )
  }
  if (kind === 'leaves') {
    return (
      <svg viewBox="0 0 18 18" className="h-full w-full bg-white">
        <path d="M0 0 5 3l4 2 4-2 5-3v18l-5-3-4-2-4 2-5 3z" fill="#8cbf3f" />
        <path d="M6 6h6v6H6z" fill="#5b9e35" stroke="#e4d53a" strokeWidth="1.500" />
        <path d="M1 5v8M17 5v8" stroke="#dbe49a" strokeWidth="2" />
      </svg>
    )
  }
  if (kind === 'scroll') {
    return (
      <svg viewBox="0 0 18 18" className="h-full w-full bg-[#a3723f]" fill="none" stroke="#e3d2b4" strokeWidth="1.500">
        <path d="M2 6c0-5 6-4 5 0-1 3-4 1-3-1M11 8c-2-5 5-7 6-3 0 3-4 3-3 0M3 16c-2-5 5-6 6-2M11 16c-1-5 6-6 6-1M7 9l4 2" />
      </svg>
    )
  }
  if (kind === 'black') return <div className="h-full border border-white bg-black" />
  return <div className="h-full" style={{ background: kind }} />
}

function SwatchesPanel() {
  return (
    <section className="flex h-[226px] shrink-0 flex-col bg-[#535353] px-2 pt-[9px]">
      <div className="flex h-[49px] items-start justify-between">
        <FillStroke />
        <div className="flex h-[33px] w-[67px] overflow-hidden rounded-[4px] border border-[#606060]">
          <button aria-label="リスト表示" className="flex flex-1 flex-col items-center justify-center gap-[3px]">
            {[0, 1, 2, 3].map((n) => <span key={n} className="h-[2px] w-[17px] bg-[#c6c6c6]" />)}
          </button>
          <button aria-label="サムネール表示" className="grid w-8 grid-cols-[repeat(3,6px)] content-center justify-center gap-px bg-[#2f2f2f]">
            {Array.from({ length: 9 }, (_, n) => <span key={n} className="h-[6px] w-[6px] bg-white" />)}
          </button>
        </div>
      </div>
      <div className="flex h-[141px] justify-between border border-[#5f5f5f] pr-1">
        <div className="flex flex-col">
          {swatchRows.map((row, i) => (
            <div key={i} className={clsx('grid h-5 w-[370px] grid-cols-[repeat(19,minmax(0,1fr))] gap-px pb-px', i > 2 && 'mt-[2px]')}>
              {row.map((kind, n) => <Swatch key={n} kind={kind} />)}
            </div>
          ))}
        </div>
        <div className="flex flex-col justify-between py-1 text-[#5f5f5f]"><Chevron up /><Chevron /></div>
      </div>
      <div className="flex flex-1 items-center justify-between pr-[29px] pl-[6px]">
        <div className="flex gap-[18px]">
          <FooterIcon label="ライブラリ"><path d="M3 2v14M7 2v14" strokeWidth="3" /><path d="m11 3 5 13" strokeWidth="2.500" /><path d="M17 15h4l-2 2z" fill="#ccc" stroke="none" /></FooterIcon>
          <FooterIcon label="テーマ"><circle cx="8" cy="9" r="4.500" /><circle cx="8" cy="9" r="1.500" fill="#ccc" /><path d="m11 6 4-3M11 12l4 3" /><circle cx="15.500" cy="3" r="1.500" fill="#ccc" /><circle cx="15.500" cy="15" r="1.500" fill="#ccc" /></FooterIcon>
          <FooterIcon label="ライブラリに追加"><path d="M4 7V1.500h14V16h-6M8 4h7v8M1 13h8M6 9l4 4-4 4" strokeWidth="1.700" /></FooterIcon>
        </div>
        <div className="flex gap-4">
          <FooterIcon label="スウォッチの種類"><path d="M2 2h13v13H2z" fill="#c6c6c6" /><path d="M3 7h11M3 11h11M6.500 3v11M10.500 3v11" stroke="#535353" /><path d="M16 15h4l-2 2z" fill="#ccc" stroke="none" /></FooterIcon>
          <FooterIcon label="オプション"><path d="M3 2h14v14H3zM3 4h14M5 7.500h2M8.500 7.500H15M5 10.500h2M8.500 10.500H15M5 13.500h2M8.500 13.500H15" /></FooterIcon>
          <FooterIcon label="新規グループ"><path d="M1 3h7l2 2h9v11H1z" fill="#c6c6c6" stroke="none" /></FooterIcon>
          {newItem}
          {trash}
        </div>
      </div>
    </section>
  )
}

function Glyph({ label, children }: { label: string; children: ReactNode }) {
  return (
    <svg role="img" aria-label={label} width="28" height="28" viewBox="0 0 28 28" className="mr-[2px] shrink-0 overflow-visible" fill="#c0c0c0" stroke="none">
      {children}
    </svg>
  )
}

const serif = "font-['Liberation_Serif',serif]"

function Rule({ className }: { className?: string }) {
  return <hr className={clsx('border-t border-[#4a4a4a]', className)} />
}

function Row({ children, className }: { children: ReactNode; className?: string }) {
  return <div className={clsx('flex h-[29px] items-center', className)}>{children}</div>
}

function BigT({ x, y, size }: { x: number; y: number; size: number }) {
  return <text x={x} y={y} fontSize={size} fontWeight="700" className={serif}>T</text>
}

function SnapButton({ label, children, className }: { label: string; children: ReactNode; className?: string }) {
  return (
    <button aria-label={label} className={clsx('flex h-[34px] w-[34px] shrink-0 items-center justify-center rounded-[4px] bg-[#2f2f2f]', className)}>
      <svg width="28" height="28" viewBox="0 0 28 28" fill="#f0f0f0" stroke="none" className="font-['Noto_Sans_CJK_JP',sans-serif]">{children}</svg>
    </button>
  )
}

const line = { fill: 'none', stroke: '#c0c0c0', strokeWidth: 1.4 }
const bright = { fill: 'none', stroke: '#f0f0f0', strokeWidth: 1.5 }

function CharacterPanel() {
  return (
    <section className="flex flex-1 flex-col bg-[#535353] px-2 pt-[9px]">
      <Field
        label="フォントファミリ"
        value="小塚ゴシック Pr6N"
        className="w-[342px]"
        lead={
          <svg width="28" height="27" viewBox="0 0 28 27" fill="none" stroke="#aaa" strokeWidth="1.600" className="shrink-0">
            <circle cx="7" cy="11.500" r="4.800" /><path d="m10.500 15 5 5M17 11.500l4.500 4 4.500-4" />
          </svg>
        }
      />
      <Field label="フォントスタイル" value="R" className="mt-[7px]" />
      <Rule className="mt-2" />
      <Row className="mt-2">
        <Glyph label="フォントサイズ"><BigT x={-1} y={23} size={14} /><BigT x={8} y={23} size={27} /></Glyph>
        <Field label="フォントサイズ" value="12 pt" stepper className="w-[129px]" />
        <div className="flex-1" />
        <Glyph label="行送り"><text x="12" y="11" fontSize="12">A</text><text x="12" y="25" fontSize="12">A</text><path d="M9 12.500h14M9 26h14M4 12v13M1 15l3-4 3 4M1 22l3 4 3-4" {...line} /></Glyph>
        <Field label="行送り" value="" stepper className="w-[130px]" />
      </Row>
      <Row className="mt-[7px]">
        <Glyph label="垂直比率"><BigT x={8} y={22} size={27} /><path d="M4 5v17M1 8l3-4 3 4M1 19l3 4 3-4" {...line} /></Glyph>
        <Field label="垂直比率" value="100%" stepper className="w-[129px]" />
        <div className="flex-1" />
        <Glyph label="水平比率"><BigT x={3} y={19} size={27} /><path d="M2 23.500h21M5 20.500l-4 3 4 3M20 20.500l4 3-4 3" {...line} /></Glyph>
        <Field label="水平比率" value="100%" stepper className="w-[130px]" />
      </Row>
      <Row className="mt-[7px]">
        <Glyph label="カーニング"><text x="0" y="15" fontSize="16">V</text><text x="12" y="17" fontSize="16">A</text><path d="M8 18 15 2M24 23H14M17 20l-4 3 4 3" {...line} /></Glyph>
        <Field label="カーニング" value="0" stepper className="w-[129px]" />
        <div className="flex-1" />
        <Glyph label="トラッキング"><path d="M0 1h25v16H0z" /><text x="1" y="15" fontSize="17" fontWeight="700" fill="#484848">VA</text><path d="M2 23h21M5 20l-4 3 4 3M20 20l4 3-4 3" {...line} /></Glyph>
        <Field label="トラッキング" value="0" stepper className="w-[130px]" />
      </Row>
      <Rule className="mt-2" />
      <Row className="mt-2">
        <Glyph label="文字ツメ"><text x="5" y="15" fontSize="15">あ</text><path d="M3 3v14M20 3v14" {...line} strokeDasharray="1.500 1.500" /><path d="M1 21h6M5 19l2 2-2 2M22 21h-6M18 19l-2 2 2 2" {...line} /></Glyph>
        <Field label="文字ツメ" value="0%" stepper className="w-[129px]" />
      </Row>
      <Row className="mt-[7px]">
        <Glyph label="アキを挿入(左)"><text x="6" y="15" fontSize="15">あ</text><path d="M4 3v14M21 3v14" {...line} strokeDasharray="1.500 1.500" /><path d="M1 22h9M7 19l3 3-3 3" {...line} /></Glyph>
        <Select label="アキを挿入(左)" value="自動" className="w-[129px]" />
        <div className="flex-1" />
        <Glyph label="アキを挿入(右)"><text x="8" y="15" fontSize="15">あ</text><path d="M7 3v14M23 3v14" {...line} strokeDasharray="1.500 1.500" /><path d="M27 22h-9M21 19l-3 3 3 3" {...line} /></Glyph>
        <Select label="アキを挿入(右)" value="自動" className="w-[130px]" />
      </Row>
      <Rule className="mt-2" />
      <Row className="mt-2">
        <Glyph label="ベースラインシフト"><text x="1" y="18" fontSize="17">A</text><text x="14" y="11" fontSize="13">a</text><path d="M1 20h12M13 13h8M17.500 24v-8M15 18l2.500-3 2.500 3" {...line} /></Glyph>
        <Field label="ベースラインシフト" value="0 pt" stepper className="w-[129px]" />
        <div className="flex-1" />
        <Glyph label="文字回転"><BigT x={6} y={20} size={18} /><path d="M9 4.500a10.500 10.500 0 1 0 8.500.500M12 1l5 3-4 3" {...line} /></Glyph>
        <Field label="文字回転" value="0°" stepper className="w-[130px]" />
      </Row>
      <Rule className="mt-[7px]" />
      <div className={clsx('flex h-9 items-center px-1 text-[22px] text-[#c0c0c0]', serif)}>
        <button aria-label="オールキャップス" className="w-11 text-left">TT</button>
        <button aria-label="スモールキャップス" className="text-left">T<span className="text-[17px]">T</span></button>
        <div className="flex-1" />
        <button aria-label="上付き文字" className="w-10 text-left">T<sup className="text-[13px]">1</sup></button>
        <button aria-label="下付き文字" className="w-10 text-left">T<sub className="text-[13px]">1</sub></button>
        <div className="w-[86px]" />
        <button aria-label="下線" className="w-10 text-left underline underline-offset-4">T</button>
        <button aria-label="打ち消し線" className="w-[18px] text-left line-through">T</button>
      </div>
      <Rule />
      <Row className="mt-[9px]">
        <Select label="言語" value="英語 : 米国" className="w-[159px]" />
        <div className="flex-1" />
        <Glyph label="アンチエイリアス"><text x="0" y="16" fontSize="16">a</text><text x="9" y="21" fontSize="17">a</text></Glyph>
        <Select label="アンチエイリアス" value="シャープ" className="w-[130px]" />
      </Row>
      <Rule className="mt-2" />
      <div className="flex h-[50px] shrink-0 items-center">
        <span className="flex-1 text-[17px] text-[#ccc]">グリフにスナップ</span>
        <button aria-label="スナップ表示" className="mr-6">
          <svg width="26" height="24" viewBox="0 0 26 24" fill="#b5b5b5">
            <path d="M1 2h14v18H1z" {...line} /><text x="2" y="17" fontSize="17">A</text><text x="15" y="18" fontSize="17">g</text>
          </svg>
        </button>
        <button aria-label="情報" className="mr-[6px]">
          <svg width="20" height="20" viewBox="0 0 20 20"><circle cx="10" cy="10" r="9" {...line} /><path d="M8.800 4h2.600v2.500H8.800zM7.500 8h4v5.500H13V15H7.500v-1.500H9V9.500H7.500z" fill="#c0c0c0" /></svg>
        </button>
      </div>
      <div className="mt-[6px] flex shrink-0 items-center">
        <SnapButton label="仮想ボディ"><path d="M4 4h20v20H4z" {...bright} /><text x="5.500" y="20.500" fontSize="17">あ</text></SnapButton>
        <SnapButton label="仮想ボディの中心" className="ml-[22px]"><path d="M4 4h20v20H4zM1 14h26" {...bright} /><text x="5.500" y="20.500" fontSize="17">あ</text></SnapButton>
        <SnapButton label="字形の境界" className="ml-9"><path d="M2 3h24v22H2z" {...bright} /><text x="2.500" y="20" fontSize="20">Ag</text></SnapButton>
        <SnapButton label="ベースライン" className="ml-[37px]"><text x="2" y="20" fontSize="21">Ax</text><path d="M2 23h24" {...bright} /></SnapButton>
        <div className="flex-1" />
        <SnapButton label="角度ガイド"><text x="5" y="21" fontSize="20">A</text><path d="M15 4l8 19" {...bright} /></SnapButton>
        <SnapButton label="アンカーポイント" className="ml-[23px]"><text x="6" y="21" fontSize="20">A</text><path d="M12.500 4.500h5v5h-5z" fill="#2f2f2f" stroke="#f0f0f0" strokeWidth="1.500" /></SnapButton>
      </div>
    </section>
  )
}

const dockGrip = (
  <svg width="8" height="12" viewBox="0 0 8 12" fill="none" stroke="#999" strokeWidth="1.200" className="mr-[5px] inline-block">
    <path d="M1 5l3-4 3 4M1 7l3 4 3-4" />
  </svg>
)

function Dock() {
  return (
    <aside className="flex w-[423px] shrink-0 flex-col overflow-hidden border-r-5 border-l-4 border-[#454545]">
      <div className="flex h-[18px] shrink-0 items-center justify-end border-b border-[#3a3a3a] bg-[#424242] pr-[9px]"><Collapse /></div>
      <PanelTabs className="h-[38px]">
        <PanelTab label="プロパティ" className="w-[103px]" />
        <PanelTab label="レイヤー" active className="w-[85px]" />
      </PanelTabs>
      <LayersPanel />
      <PanelTabs className="mt-[2px] h-[37px]">
        <PanelTab label="スウォッチ" active className="w-[102px] font-medium" />
        <PanelTab label="ブラシ" className="w-[61px] pl-[10px]" />
        <PanelTab label="カラー" className="w-[60px] pl-[9px]" />
        <PanelTab label="カラーガ" className="w-[68px] pl-[10px] text-left" />
        <PanelTab label="グラデー" className="w-[68px] pl-[8px] text-left" />
      </PanelTabs>
      <SwatchesPanel />
      <PanelTabs className="mt-1 h-[38px]">
        <PanelTab label="文字" active className="w-[63px] font-medium" lead={dockGrip} />
        <PanelTab label="段落" className="w-[56px]" />
        <PanelTab label="OpenType" latin className="w-[102px]" />
      </PanelTabs>
      <CharacterPanel />
    </aside>
  )
}

export default function App() {
  return (
    <div className={clsx('flex h-screen flex-col overflow-hidden bg-[#535353]', JP)}>
      <TitleBar />
      <ControlBar />
      <div className="flex min-h-0 flex-1">
        <ToolBar />
        <DocumentWindow />
        <Dock />
      </div>
    </div>
  )
}
